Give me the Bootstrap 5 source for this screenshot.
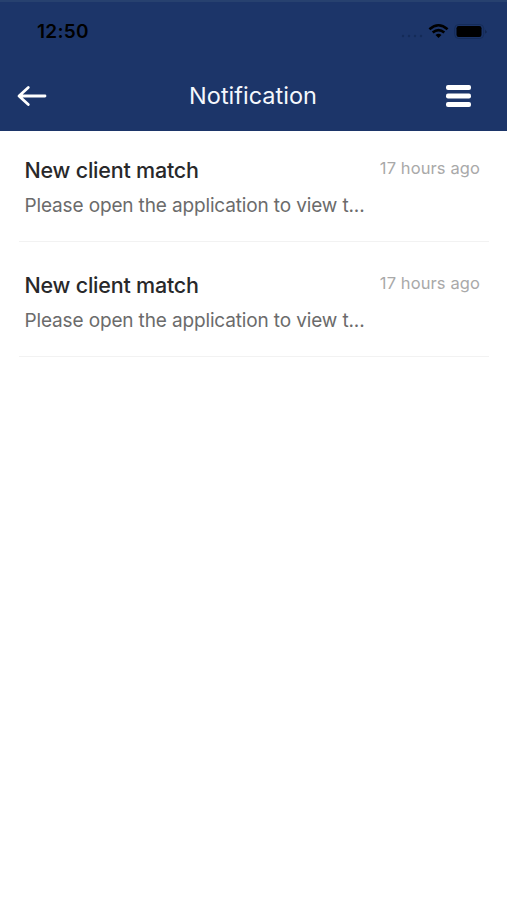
<!DOCTYPE html>
<html lang="en">
<head>
<meta charset="utf-8">
<meta name="viewport" content="width=device-width, initial-scale=1">
<title>Notification</title>
<link href="https://cdn.jsdelivr.net/npm/bootstrap@5.3.0/dist/css/bootstrap.min.css" rel="stylesheet">
<style>
body{font-family:Inter,"Liberation Sans",sans-serif;background:#fff}
.app-top{background:#1c3569;height:131px;border-top:2px solid #27416f}
.status-row{height:60px;padding:0 19px 0 37px;color:#000}
.clock{font-size:19px;font-weight:600;line-height:24px;letter-spacing:.3px}
.title-bar{height:67px;padding:0 36px 0 17px}
.title-bar h1{font-size:23.5px;font-weight:400;line-height:30px;letter-spacing:0;color:#f5f8fd}
.back-btn{width:43px}
.notice-list{padding:0 18px 0 19px}
.notice{height:115px;padding:27px 9px 0 5.500px;border-bottom:1px solid #f2f2f2}
.notice:first-child{height:111px;padding-top:23px}
.notice h2{font-size:21.500px;font-weight:500;line-height:32px;letter-spacing:-.22px;color:#28282a}
.notice time{font-size:16.500px;line-height:28px;letter-spacing:.1px;color:#a9a9a9}
.notice p{font-size:19px;line-height:26px;letter-spacing:-.14px;margin-top:7px;color:#6b6b6b}
.notice p,.notice h2,.notice time{white-space:nowrap}
</style>
<script src="https://cdn.jsdelivr.net/npm/bootstrap@5.3.0/dist/js/bootstrap.bundle.min.js"></script>
</head>
<body>
<header class="app-top">
  <div class="status-row d-flex justify-content-between align-items-center">
    <span class="clock">12:50</span>
    <svg width="88" height="20" viewBox="0 0 88 20" aria-hidden="true">
      <g fill="#152c59"><circle cx="3" cy="14" r="1.2"/><circle cx="9" cy="14" r="1.2"/><circle cx="15" cy="14" r="1.2"/><circle cx="21" cy="14" r="1.2"/></g>
      <g transform="translate(-1 0)">
        <g fill="none" stroke="#000" stroke-width="2.6"><path d="M30.400 7.200Q39.500 -.7 48.600 7.200"/><path d="M33.700 10.600Q39.500 5.500 45.300 10.600"/></g>
        <path d="M36.500 12.900Q39.500 10.500 42.500 12.900L39.500 16Z" fill="#000"/>
      </g>
      <rect x="54.700" y="2.500" width="29" height="14" rx="4" fill="none" stroke="#152c59"/>
      <rect x="56.500" y="4" width="25" height="11" rx="2.200" fill="#000"/>
      <path d="M85.500 7.500q1.800 2 0 4.200z" fill="#0c1a37"/>
    </svg>
  </div>
  <nav class="title-bar d-flex justify-content-between align-items-center">
    <a href="#" class="back-btn d-flex" aria-label="Back">
      <svg width="30" height="22" viewBox="0 0 30 22" fill="none" stroke="#fff" stroke-width="2.8" stroke-linecap="round" stroke-linejoin="round"><path d="M28 11H2.500M11.300 2.500L2 11L11.300 19.500"/></svg>
    </a>
    <h1 class="m-0">Notification</h1>
    <a href="#" class="d-flex" aria-label="Menu">
      <svg width="25" height="22" viewBox="0 0 25 22" fill="#fff"><rect width="25" height="5" rx="2"/><rect y="8.500" width="25" height="5" rx="2"/><rect y="17" width="25" height="5" rx="2"/></svg>
    </a>
  </nav>
</header>
<main>
  <ul class="notice-list list-unstyled m-0">
    <li class="notice">
      <div class="d-flex justify-content-between align-items-start"><h2 class="m-0">New client match</h2><time>17 hours ago</time></div>
      <p class="mb-0">Please open the application to view t...</p>
    </li>
    <li class="notice">
      <div class="d-flex justify-content-between align-items-start"><h2 class="m-0">New client match</h2><time>17 hours ago</time></div>
      <p class="mb-0">Please open the application to view t...</p>
    </li>
  </ul>
</main>
</body>
</html>
